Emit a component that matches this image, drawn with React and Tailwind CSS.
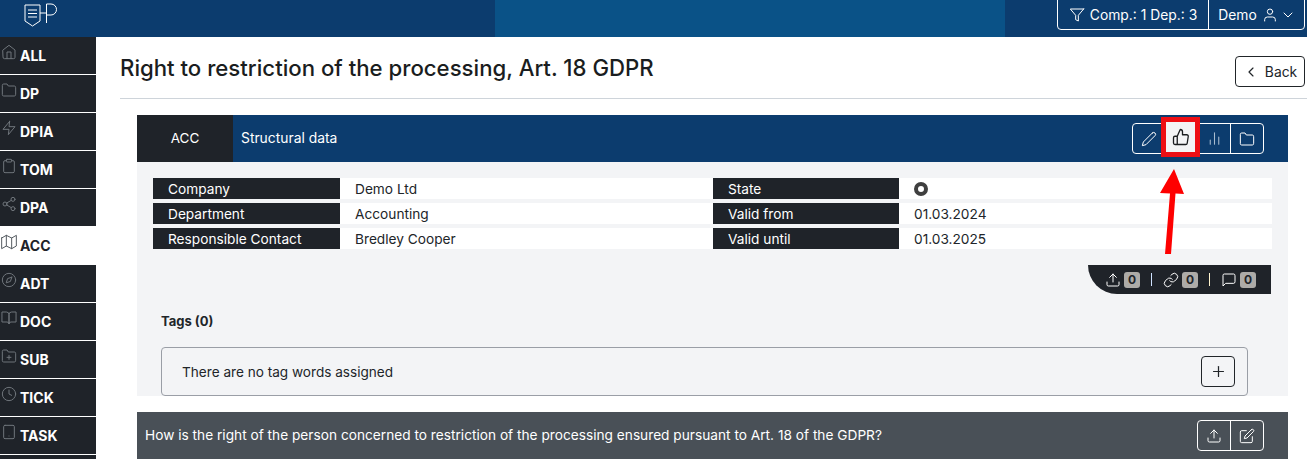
import {
  FiHome, FiFolder, FiZap, FiClipboard, FiShare2, FiMap, FiCompass, FiBookOpen, FiFolderPlus,
  FiClock, FiTablet, FiFilter, FiUser, FiChevronDown, FiChevronLeft, FiEdit2, FiThumbsUp,
  FiBarChart2, FiUpload, FiLink, FiMessageSquare, FiPlus, FiEdit
} from 'react-icons/fi'

const NAV = [
  { label: 'ALL', Icon: FiHome },
  { label: 'DP', Icon: FiFolder },
  { label: 'DPIA', Icon: FiZap },
  { label: 'TOM', Icon: FiClipboard },
  { label: 'DPA', Icon: FiShare2 },
  { label: 'ACC', Icon: FiMap, active: true },
  { label: 'ADT', Icon: FiCompass },
  { label: 'DOC', Icon: FiBookOpen },
  { label: 'SUB', Icon: FiFolderPlus },
  { label: 'TICK', Icon: FiClock },
  { label: 'TASK', Icon: FiTablet },
  { label: '', Icon: null },
]

const ROWS = [
  ['Company', 'Demo Ltd', 'State', null],
  ['Department', 'Accounting', 'Valid from', '01.03.2024'],
  ['Responsible Contact', 'Bredley Cooper', 'Valid until', '01.03.2025'],
]

function Logo() {
  return (
    <svg width="34" height="26" viewBox="0 0 34 26" fill="none" stroke="white" strokeWidth="1">
      <path d="M1 3h15v16l-7.500 5L1 19z" />
      <path d="M4 8h9M4 11.500h9M4 15h9" />
      <path d="M16 11h6M22.500 2v19M22.500 2h4.500a4.500 4.500 0 0 1 0 11h-4.500" />
    </svg>
  )
}

function Sidebar() {
  return (
    <div className="w-[96px] shrink-0 flex flex-col">
      {NAV.map(({ label, Icon, active }, i) => (
        <div
          key={i}
          className={`h-[37px] mb-px shrink-0 flex items-start pl-px pt-[7px] gap-[3px] ${active ? 'bg-white text-[#1f2329]' : 'bg-[#1f2329] text-white'}`}
        >
          {Icon && <Icon size={16} strokeWidth={1.5} className={active ? 'text-[#555b61]' : 'text-[#6f757b]'} />}
          <span className="text-[14px] leading-[17px] font-bold mt-[3px]">{label}</span>
        </div>
      ))}
    </div>
  )
}

function InfoRow({ label, value, state, labelWidth }) {
  return (
    <div className="flex h-[21px] bg-white">
      <div className={`${labelWidth} shrink-0 bg-[#1f2329] text-white pl-[15px] pt-px text-[13.7px] leading-[20px]`}>{label}</div>
      <div className="pl-[15px] pt-px text-[13.7px] leading-[20px] text-[#212529] flex items-center">
        {state ? <span className="w-[14px] h-[14px] rounded-full border-[4px] border-[#3f3f3f] bg-white" /> : value}
      </div>
    </div>
  )
}

function IconGroup({ children, className = '' }) {
  return <div className={`flex h-[31px] border border-white rounded-[4px] ${className}`}>{children}</div>
}

function CountBadge() {
  return <span className="ml-[3px] w-[16px] h-[16px] rounded-[3px] bg-[#adaba8] text-[#1f2329] flex items-center justify-center">0</span>
}

export default function App() {
  return (
    <div className="relative w-[1307px] h-[459px] overflow-hidden bg-white font-['Inter',sans-serif]">
      {/* top bar */}
      <div className="h-[37px] flex bg-[#0c3c6e]">
        <div className="w-[495px] pl-[24px] pt-[2px]"><Logo /></div>
        <div className="w-[510px] bg-[#0a5287]" />
        <div className="flex-1 flex justify-end pr-[2px]">
          <div className="h-[31px] -mt-px flex border border-white rounded-b-[4px] text-white text-[13.85px]">
            <div className="w-[151px] flex items-center justify-center gap-[5px] border-r border-white">
              <FiFilter size={16} strokeWidth={1.5} />
              <span className="pt-px">Comp.: 1 Dep.: 3</span>
            </div>
            <div className="w-[95px] flex items-center justify-center gap-[5px] pl-[1px]">
              <span className="pt-px">Demo</span>
              <FiUser size={16} strokeWidth={1.5} />
              <FiChevronDown size={16} strokeWidth={1.5} className="-ml-[3px]" />
            </div>
          </div>
        </div>
      </div>

      <div className="flex">
        <Sidebar />

        <div className="flex-1 min-w-0 pl-[24px]">
          {/* page heading */}
          <div className="h-[62px] flex items-start justify-between border-b border-[#ced4da]">
            <h1 className="text-[22.2px] leading-[30px] font-medium text-[#1a1d20] mt-[16px]">
              Right to restriction of the processing, Art. 18 GDPR
            </h1>
            <button className="mt-[19px] mr-[2px] w-[70px] h-[31px] pt-px border border-[#212529] rounded-[4px] flex items-center justify-center gap-[6px] text-[13.85px] text-[#212529]">
              <FiChevronLeft size={16} strokeWidth={1.75} />
              Back
            </button>
          </div>

          <div className="ml-[17px] w-[1151px] mt-[16px]">
            {/* card header */}
            <div className="h-[47px] flex items-center bg-[#0c3c6e]">
              <div className="w-[96px] h-full bg-[#1f2329] text-white text-[13.5px] flex items-center justify-center">ACC</div>
              <div className="pl-[8px] text-[13.85px] text-white flex-1">Structural data</div>
              <IconGroup className="mr-[24px] text-white">
                <div className="w-[32px] flex items-center justify-center"><FiEdit2 size={16} strokeWidth={1.5} /></div>
                <div className="w-[33px]" />
                <div className="w-[33px] flex items-center justify-center border-r border-white text-[#a9bccf]"><FiBarChart2 size={17} strokeWidth={1.5} /></div>
                <div className="w-[32px] flex items-center justify-center"><FiFolder size={16} strokeWidth={1.5} /></div>
              </IconGroup>
            </div>

            {/* card body */}
            <div className="h-[234px] bg-[#f3f4f6] pt-[16px] px-[16px]">
              <div className="grid grid-cols-[560px_559px] gap-y-[4px]">
                {ROWS.map((r) => [
                  <InfoRow key={r[0]} label={r[0]} value={r[1]} labelWidth="w-[187px]" />,
                  <InfoRow key={r[2]} label={r[2]} value={r[3]} state={r[3] === null} labelWidth="w-[186px]" />,
                ])}
              </div>
              <div className="flex justify-end mt-[16px] pr-[1px]">
                <div className="w-[183px] h-[29px] bg-[#1f2329] rounded-bl-[29px] text-white flex items-center justify-end pr-[15px] text-[12px] font-bold">
                  <FiUpload size={16} strokeWidth={1.5} />
                  <CountBadge />
                  <span className="mx-[11px] w-px h-[13px] bg-[#cfe2ff]" />
                  <FiLink size={16} strokeWidth={1.5} />
                  <CountBadge />
                  <span className="mx-[11px] w-px h-[13px] bg-[#fff3cd]" />
                  <FiMessageSquare size={16} strokeWidth={1.5} />
                  <CountBadge />
                </div>
              </div>
              <div className="mt-[19px] ml-[8px] text-[13px] leading-[16px] font-bold text-[#212529]">Tags (0)</div>
              <div className="mt-[18px] ml-[8px] w-[1087px] h-[49px] border border-[#9a9ea6] rounded-[4px] flex items-center justify-between pl-[20px] pr-[12px] text-[13.6px] text-[#212529]">
                <span className="pt-px">There are no tag words assigned</span>
                <button className="w-[34px] h-[31px] border border-[#212529] rounded-[4px] flex items-center justify-center">
                  <FiPlus size={17} strokeWidth={1.75} />
                </button>
              </div>
            </div>

            {/* question bar */}
            <div className="mt-[16px] h-[47px] bg-[#495057] flex items-center justify-between pl-[8px] pr-[24px] text-white text-[13.7px]">
              <span>How is the right of the person concerned to restriction of the processing ensured pursuant to Art. 18 of the GDPR?</span>
              <IconGroup>
                <div className="w-[33px] flex items-center justify-center border-r border-white"><FiUpload size={16} strokeWidth={1.5} /></div>
                <div className="w-[32px] flex items-center justify-center"><FiEdit size={16} strokeWidth={1.5} /></div>
              </IconGroup>
            </div>
          </div>
        </div>
      </div>

      {/* highlight annotation over the thumbs-up button */}
      <div className="absolute left-[1161px] top-[117px] w-[39px] h-[40px] border-[5px] border-[#ee0f15] bg-[#f3f4f6] flex items-center justify-center text-[#1a1d20]">
        <FiThumbsUp size={18} strokeWidth={1.75} />
      </div>
      <svg className="absolute left-[1150px] top-[165px]" width="50" height="95" viewBox="0 0 50 95">
        <path d="M24 4L34 29L25.500 28.500L21 89H15L20 28.500L10 28Z" fill="#fe0000" />
      </svg>
    </div>
  )
}
